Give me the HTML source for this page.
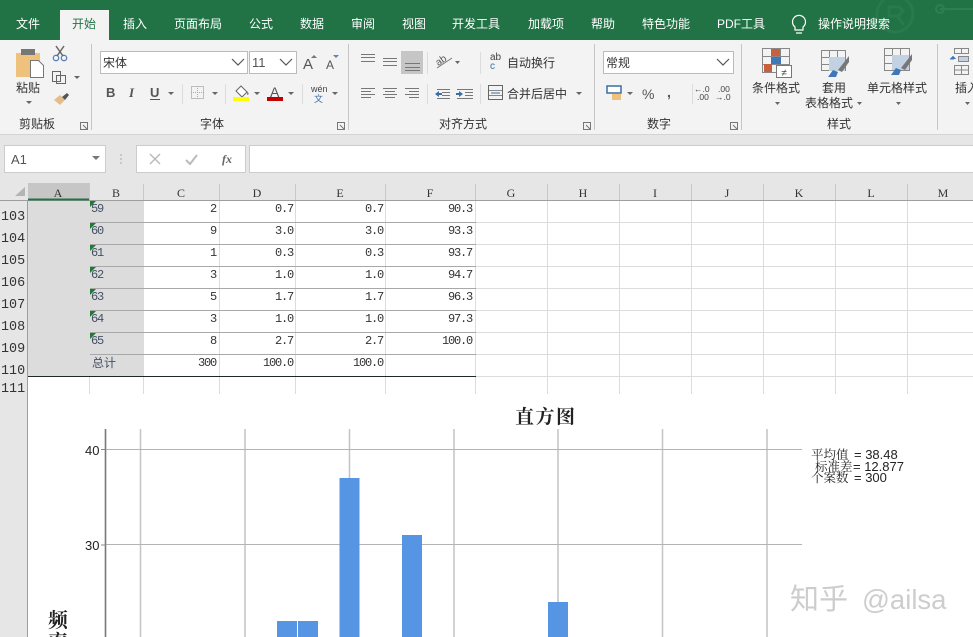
<!DOCTYPE html>
<html><head><meta charset="utf-8"><style>
html,body{margin:0;padding:0;background:#fff}
svg{display:block}
text{font-family:"Liberation Sans","Noto Sans CJK SC",sans-serif;font-size:12px;fill:#333}
.tab text{fill:#fff}
.m{text-anchor:middle}
.cell{transform:translate(-1px,0)}
.cell text{font-family:"Liberation Mono","Noto Serif CJK SC",monospace;font-size:12px;letter-spacing:-1.2px;fill:#333;text-anchor:end}
.hd text{font-family:"Liberation Serif","Noto Serif CJK SC",serif;font-size:12px;fill:#333;text-anchor:middle}
.rn text{font-family:"Liberation Mono",monospace;font-size:13.4px;fill:#333}
.tri text{font-family:"Liberation Mono",monospace;font-size:12px;letter-spacing:-1.2px;fill:#444f66}
.sr{font-family:"Noto Serif CJK SC",serif;font-size:12.5px;fill:#222}
.ar{font-family:"Liberation Sans",sans-serif;font-size:13px;fill:#222}
</style></head><body>
<svg width="973" height="637" viewBox="0 0 973 637" xmlns="http://www.w3.org/2000/svg">
<rect width="973" height="637" fill="#fff"/>
<!-- title -->
<rect width="973" height="40" fill="#217346"/>
<g fill="none" stroke="#277a4c" stroke-width="3"><circle cx="895" cy="14" r="18"/><path d="M889 7h10l4 4-5 5h-9zM897 16l7 9"/></g>
<path d="M940 9h33" stroke="#2d7f52" stroke-width="2"/><circle cx="940" cy="9" r="4" fill="none" stroke="#2d7f52" stroke-width="2"/>
<rect x="60" y="10" width="49" height="30" fill="#f3f3f3"/>
<g class="tab">
<text x="16" y="28">文件</text>
<text x="72" y="28" style="fill:#217346">开始</text>
<text x="123" y="28">插入</text>
<text x="174" y="28">页面布局</text>
<text x="249" y="28">公式</text>
<text x="300" y="28">数据</text>
<text x="351" y="28">审阅</text>
<text x="402" y="28">视图</text>
<text x="452" y="28">开发工具</text>
<text x="528" y="28">加载项</text>
<text x="591" y="28">帮助</text>
<text x="642" y="28">特色功能</text>
<text x="717" y="28">PDF工具</text>
<text x="818" y="28">操作说明搜索</text>
</g>
<path d="M795 27a6.500 6.500 0 1 1 8 0v3h-8zM796 33h6" fill="none" stroke="#fff" stroke-width="1.200"/>
<!-- ribbon -->
<rect y="40" width="973" height="95" fill="#f3f3f3"/>
<rect y="135" width="973" height="48" fill="#e6e6e6"/>
<path d="M0 134.500H973" stroke="#d4d4d4"/>
<g stroke="#c6c6c6"><path d="M91.500 44v86M348.500 44v86M594.500 44v86M741.500 44v86M937.500 44v86"/></g>
<g stroke="#dcdcdc"><path d="M182.500 84v20M225.500 84v20M302.500 84v20M427.500 52v22M427.500 84v20M480.500 52v22M480.500 84v20M692.500 84v20"/></g>
<!-- clipboard -->
<rect x="16" y="53" width="24" height="24" fill="#eec27c"/><rect x="21" y="49" width="14" height="6" fill="#777"/>
<path d="M30.500 60.500h8l5 5v12h-13z" fill="#fff" stroke="#777"/>
<text x="16" y="92">粘贴</text>
<path d="M26 101h6l-3 3z" fill="#666"/>
<g fill="none" stroke="#5a82b4" stroke-width="1.300"><circle cx="56" cy="58" r="2.700"/><circle cx="64" cy="58" r="2.700"/></g><path d="M56 46l7 10M64 46l-7 10" stroke="#666" stroke-width="1.500"/>
<path d="M52.500 71.500h8v10h-8zM56.500 75.500h9v8h-9z" fill="#f3f3f3" stroke="#666"/><path d="M74 76h6l-3 3z" fill="#666"/>
<path d="M54 100l6-5 5 5-5 5z" fill="#e5bd8a"/><path d="M62 97l5-4 2 2-4 5z" fill="#555"/>
<text x="19" y="128">剪贴板</text>
<path d="M80.500 122.500h7v7h-7zM83 125l4 4" fill="none" stroke="#777"/>
<!-- font -->
<rect x="100.500" y="51.500" width="147" height="22" fill="#fff" stroke="#bbb"/>
<rect x="249.500" y="51.500" width="47" height="22" fill="#fff" stroke="#bbb"/>
<text x="103" y="67">宋体</text><text x="252" y="67" style="font-size:13px;fill:#555">11</text>
<path d="M232 59l6 6 6-6M280 59l6 6 6-6" fill="none" stroke="#555" stroke-width="1.200"/>
<text x="303" y="69" style="font-size:15px;fill:#555">A</text><path d="M311 58l3-3 3 3z" fill="#777"/>
<text x="326" y="69" style="font-size:12px;fill:#555">A</text><path d="M333 55h6l-3 3z" fill="#5a82b4"/>
<text x="106" y="97" style="font-size:13px;font-weight:bold;fill:#555">B</text>
<text x="129" y="97" style="font-size:13px;font-style:italic;font-weight:bold;font-family:'Liberation Serif',serif;fill:#555">I</text>
<text x="150" y="97" style="font-size:13px;font-weight:bold;fill:#555">U</text><path d="M150 99.500h10" stroke="#555"/>
<path d="M168 92h6l-3 3zM212 92h6l-3 3zM254 92h6l-3 3zM288 92h6l-3 3zM332 92h6l-3 3z" fill="#666"/>
<rect x="191.500" y="86.500" width="12" height="12" fill="none" stroke="#888" stroke-dasharray="1 1"/><path d="M197.500 86v13M191 92.500h13" stroke="#aaa" stroke-dasharray="1 1"/>
<path d="M236 91l5-5 6 6-5 5z" fill="#fff" stroke="#666"/><path d="M247 91l2 3-2 1z" fill="#5a82b4"/>
<rect x="233" y="97" width="16" height="4" fill="#ff0"/>
<text x="270" y="97" style="font-size:14px;fill:#555">A</text><rect x="267" y="97" width="16" height="4" fill="#c00000"/>
<text x="311" y="92" style="font-size:9px;fill:#444">wén</text><text x="314" y="102" style="font-size:9px;fill:#3a6ea5">文</text>
<text x="200" y="128">字体</text>
<path d="M337.500 122.500h7v7h-7zM340 125l4 4" fill="none" stroke="#777"/>
<!-- align -->
<rect x="401" y="51" width="22" height="23" fill="#c6c6c6"/>
<g stroke="#777" fill="none">
<path d="M361 54.500h14M361 57.500h14M361 61.500h14"/>
<path d="M383 58.500h14M383 61.500h14M383 65.500h14"/>
<path d="M405 63.500h15M405 67.500h15M405 70.500h15"/>
<path d="M361 88.500h14M361 91.500h10M361 94.500h14M361 97.500h10"/>
<path d="M383 88.500h14M385 91.500h10M383 94.500h14M385 97.500h10"/>
<path d="M405 88.500h14M409 91.500h10M405 94.500h14M409 97.500h10"/>
<path d="M437 89.500h13M442 92.500h8M442 95.500h8M437 98.500h13"/>
<path d="M457 89.500h16M465 92.500h8M465 95.500h8M457 98.500h16"/>
<path d="M437 68l15-10"/>
</g>
<path d="M435 94l4-3v2h3v2h-3v2zM463 94l-4-3v2h-3v2h3v2z" fill="#3a6ea5"/>
<text x="435" y="64" style="font-size:10px;fill:#555" transform="rotate(-35 440 60)">ab</text>
<path d="M455 61h5l-2.500 3z" fill="#666"/>
<text x="490" y="60" style="font-size:10px;fill:#444">ab</text><text x="490" y="69" style="font-size:10px;fill:#3a6ea5">c</text>
<text x="507" y="67">自动换行</text>
<rect x="488.500" y="85.500" width="14" height="14" fill="none" stroke="#666"/><path d="M489 90.500h13M489 95.500h13" stroke="#888"/><path d="M491 93h9" stroke="#3a6ea5"/>
<text x="507" y="98">合并后居中</text>
<path d="M576 92h6l-3 3z" fill="#666"/>
<text x="439" y="128">对齐方式</text>
<path d="M583.500 122.500h7v7h-7zM586 125l4 4" fill="none" stroke="#777"/>
<!-- number -->
<rect x="603.500" y="51.500" width="130" height="22" fill="#fff" stroke="#bbb"/>
<text x="606" y="67">常规</text>
<path d="M717 59l6 6 6-6" fill="none" stroke="#555" stroke-width="1.200"/>
<rect x="607" y="86" width="14" height="7" fill="#fff" stroke="#3a6ea5" stroke-width="1.500"/><rect x="612" y="94" width="9" height="6" fill="#eec27c"/>
<path d="M627 92h6l-3 3z" fill="#666"/>
<text x="642" y="99" style="font-size:14px;fill:#555">%</text>
<text x="667" y="97" style="font-size:14px;font-weight:bold;fill:#555">,</text>
<text x="694" y="92" style="font-size:8.500px;fill:#444">←.0</text><text x="697" y="100" style="font-size:8.500px;fill:#444">.00</text>
<text x="718" y="92" style="font-size:8.500px;fill:#444">.00</text><text x="715" y="100" style="font-size:8.500px;fill:#444">→.0</text>
<text x="647" y="128">数字</text>
<path d="M730.500 122.500h7v7h-7zM733 125l4 4" fill="none" stroke="#777"/>
<!-- styles -->
<g fill="none" stroke="#888">
<path d="M762.500 48.500h27v24h-27zM771.500 48v25M780.500 48v25M762 56.500h28M762 64.500h28"/>
<path d="M821.500 50.500h24v20h-24zM829.500 50v21M837.500 50v21M821 57.500h25M821 64.500h25"/>
<path d="M884.500 48.500h25v22h-25zM892.500 48v23M900.500 48v23M884 55.500h26M884 63.500h26"/>
<path d="M954.500 48.500h14v5h-14zM961.500 48v6M954.500 65.500h14v9h-14zM961.500 65v10M954 70h15"/>
</g>
<rect x="771" y="49" width="9" height="7" fill="#c8603e"/><rect x="771" y="57" width="10" height="7" fill="#3f78b8"/><rect x="764" y="64" width="8" height="8" fill="#c8603e"/>
<rect x="776.500" y="65.500" width="15" height="12" fill="#fff" stroke="#777"/>
<text x="784" y="76" class="m" style="font-size:10px;fill:#444">≠</text>
<rect x="829" y="57" width="16" height="14" fill="#c3d2e3"/><rect x="892" y="55" width="17" height="15" fill="#c3d2e3"/>
<path d="M828 77l5-7 5 2-2 5z" fill="#3f78b8"/><path d="M838 70l11-14v6l-7 10z" fill="#777"/>
<path d="M891 75l5-7 5 2-2 5z" fill="#3f78b8"/><path d="M901 68l11-14v6l-7 10z" fill="#777"/>
<path d="M955 58.500h-4l2-2zM954 59h-4" fill="#3f78b8" stroke="#3f78b8"/><rect x="958.500" y="56.500" width="10" height="5" fill="#c3d2e3" stroke="#888"/>
<text x="752" y="92">条件格式</text>
<path d="M775 102h5l-2.500 3z" fill="#666"/>
<text x="822" y="92">套用</text>
<text x="805" y="107">表格格式</text><path d="M857 102h5l-2.500 3z" fill="#666"/>
<text x="867" y="92">单元格样式</text><path d="M896 102h5l-2.500 3z" fill="#666"/>
<text x="955" y="92">插入</text><path d="M965 102h5l-2.500 3z" fill="#666"/>
<text x="827" y="128">样式</text>
<!-- formula bar -->
<rect x="4.500" y="145.500" width="101" height="27" fill="#fff" stroke="#ccc"/>
<text x="11" y="164" style="font-size:13px;fill:#555">A1</text>
<path d="M92 156h8l-4 4z" fill="#777"/>
<path d="M121 154v2M121 158v2M121 162v2" stroke="#aaa"/>
<rect x="136.500" y="145.500" width="109" height="27" fill="#fff" stroke="#ccc"/>
<rect x="249.500" y="145.500" width="724" height="27" fill="#fff" stroke="#ccc"/>
<path d="M150 154l10 10M160 154l-10 10" stroke="#bbb" stroke-width="1.500"/>
<path d="M186 160l4 4 7-9" fill="none" stroke="#bbb" stroke-width="2"/>
<text x="222" y="163" style="font-family:'Liberation Serif',serif;font-style:italic;font-weight:bold;font-size:12px;fill:#666">fx</text>
<!-- headers -->
<rect y="183" width="973" height="17" fill="#e6e6e6"/>
<rect y="200" width="28" height="437" fill="#e6e6e6"/>
<rect x="28" y="183" width="62" height="17" fill="#c6c6c6"/>
<path d="M25 187v9h-10z" fill="#b4b4b4"/>
<g stroke="#c8c8c8"><path d="M143.500 184v16M219.500 184v16M295.500 184v16M385.500 184v16M475.500 184v16M547.500 184v16M619.500 184v16M691.500 184v16M763.500 184v16M835.500 184v16M907.500 184v16M89.500 184v16"/></g>
<path d="M0 200.500H973" stroke="#9e9e9e"/>
<path d="M28 199.500h61" stroke="#217346" stroke-width="2"/>
<path d="M27.500 200V637" stroke="#9e9e9e"/>
<g class="hd">
<text x="58" y="197">A</text><text x="116" y="197">B</text><text x="181" y="197">C</text><text x="257" y="197">D</text><text x="340" y="197">E</text><text x="430" y="197">F</text><text x="511" y="197">G</text><text x="583" y="197">H</text><text x="655" y="197">I</text><text x="727" y="197">J</text><text x="799" y="197">K</text><text x="871" y="197">L</text><text x="943" y="197">M</text>
</g>
<g class="rn">
<text x="1" y="220">103</text><text x="1" y="242">104</text><text x="1" y="264">105</text><text x="1" y="286">106</text><text x="1" y="308">107</text><text x="1" y="330">108</text><text x="1" y="352">109</text><text x="1" y="374">110</text><text x="1" y="392">111</text>
</g>
<!-- selected columns -->
<rect x="28" y="201" width="116" height="175" fill="#dcdcdc"/>
<!-- grid -->
<g stroke="#dcdcdc">
<path d="M219.500 201V394M295.500 201V394M385.500 201V394M475.500 201V394M547.500 201V394M619.500 201V394M691.500 201V394M763.500 201V394M835.500 201V394M907.500 201V394M89.500 376V394M143.500 376V394"/>
<path d="M476 222.500H973M476 244.500H973M476 266.500H973M476 288.500H973M476 310.500H973M476 332.500H973M476 354.500H973M476 376.500H973"/>
</g>
<g stroke="#a8a8a8"><path d="M90 222.500H476M90 244.500H476M90 266.500H476M90 288.500H476M90 310.500H476M90 332.500H476M90 354.500H476"/></g>
<path d="M28 376.500H476" stroke="#1c2a24"/>
<g fill="#1e7b34"><path d="M90 201h6l-6 6zM90 223h6l-6 6zM90 245h6l-6 6zM90 267h6l-6 6zM90 289h6l-6 6zM90 311h6l-6 6zM90 333h6l-6 6z"/></g>
<g class="tri">
<text x="91" y="212">59</text><text x="91" y="234">60</text><text x="91" y="256">61</text><text x="91" y="278">62</text><text x="91" y="300">63</text><text x="91" y="322">64</text><text x="91" y="344">65</text>
<text x="92" y="367" style="font-family:'Noto Sans CJK SC',sans-serif;letter-spacing:0">总计</text>
</g>
<g class="cell">
<text x="217" y="212">2</text><text x="294" y="212">0.7</text><text x="384" y="212">0.7</text><text x="473" y="212">90.3</text>
<text x="217" y="234">9</text><text x="294" y="234">3.0</text><text x="384" y="234">3.0</text><text x="473" y="234">93.3</text>
<text x="217" y="256">1</text><text x="294" y="256">0.3</text><text x="384" y="256">0.3</text><text x="473" y="256">93.7</text>
<text x="217" y="278">3</text><text x="294" y="278">1.0</text><text x="384" y="278">1.0</text><text x="473" y="278">94.7</text>
<text x="217" y="300">5</text><text x="294" y="300">1.7</text><text x="384" y="300">1.7</text><text x="473" y="300">96.3</text>
<text x="217" y="322">3</text><text x="294" y="322">1.0</text><text x="384" y="322">1.0</text><text x="473" y="322">97.3</text>
<text x="217" y="344">8</text><text x="294" y="344">2.7</text><text x="384" y="344">2.7</text><text x="473" y="344">100.0</text>
<text x="217" y="366">300</text><text x="294" y="366">100.0</text><text x="384" y="366">100.0</text>
</g>
<!-- chart -->
<rect x="28" y="394" width="945" height="243" fill="#fff"/>
<text x="515" y="423" style="font-family:'Noto Serif CJK SC',serif;font-size:19px;letter-spacing:1.500px;font-weight:700;fill:#222">直方图</text>
<g stroke="#c4c4c4" stroke-width="1.500"><path d="M140.500 429V637M245 429V637M349.500 429V637M454 429V637M558 429V637M662.500 429V637M767 429V637"/></g>
<g stroke="#b4b4b4"><path d="M106 449.500H802M106 544.500H802"/></g>
<path d="M105.500 429V637" stroke="#777" stroke-width="1.600"/>
<path d="M101 449.500h5M101 545h5" stroke="#888"/>
<g fill="#5595e4">
<rect x="277" y="621" width="20" height="16"/><rect x="298" y="621" width="20" height="16"/>
<rect x="339.500" y="478" width="20" height="159"/><rect x="402" y="535" width="20" height="102"/><rect x="548" y="602" width="20" height="35"/>
</g>
<text x="99.500" y="455" style="font-size:13px;fill:#222;text-anchor:end">40</text>
<text x="99.500" y="550" style="font-size:13px;fill:#222;text-anchor:end">30</text>
<text x="48" y="627" style="font-family:'Noto Serif CJK SC',serif;font-size:20px;font-weight:700;fill:#222">频</text>
<text x="48" y="649" style="font-family:'Noto Serif CJK SC',serif;font-size:20px;font-weight:700;fill:#222">率</text>
<text x="811" y="459" class="sr">平均值</text><text x="854" y="459" class="ar">= 38.48</text>
<text x="815" y="471" class="sr">标准差</text><text x="853" y="471" class="ar">= 12.877</text>
<text x="811" y="482" class="sr">个案数</text><text x="854" y="482" class="ar">= 300</text>
<text x="790" y="609" style="font-size:29px;fill:#cdcdcd">知乎</text>
<text x="862" y="609" style="font-size:27.500px;fill:#cdcdcd">@ailsa</text>
</svg>
</body></html>
